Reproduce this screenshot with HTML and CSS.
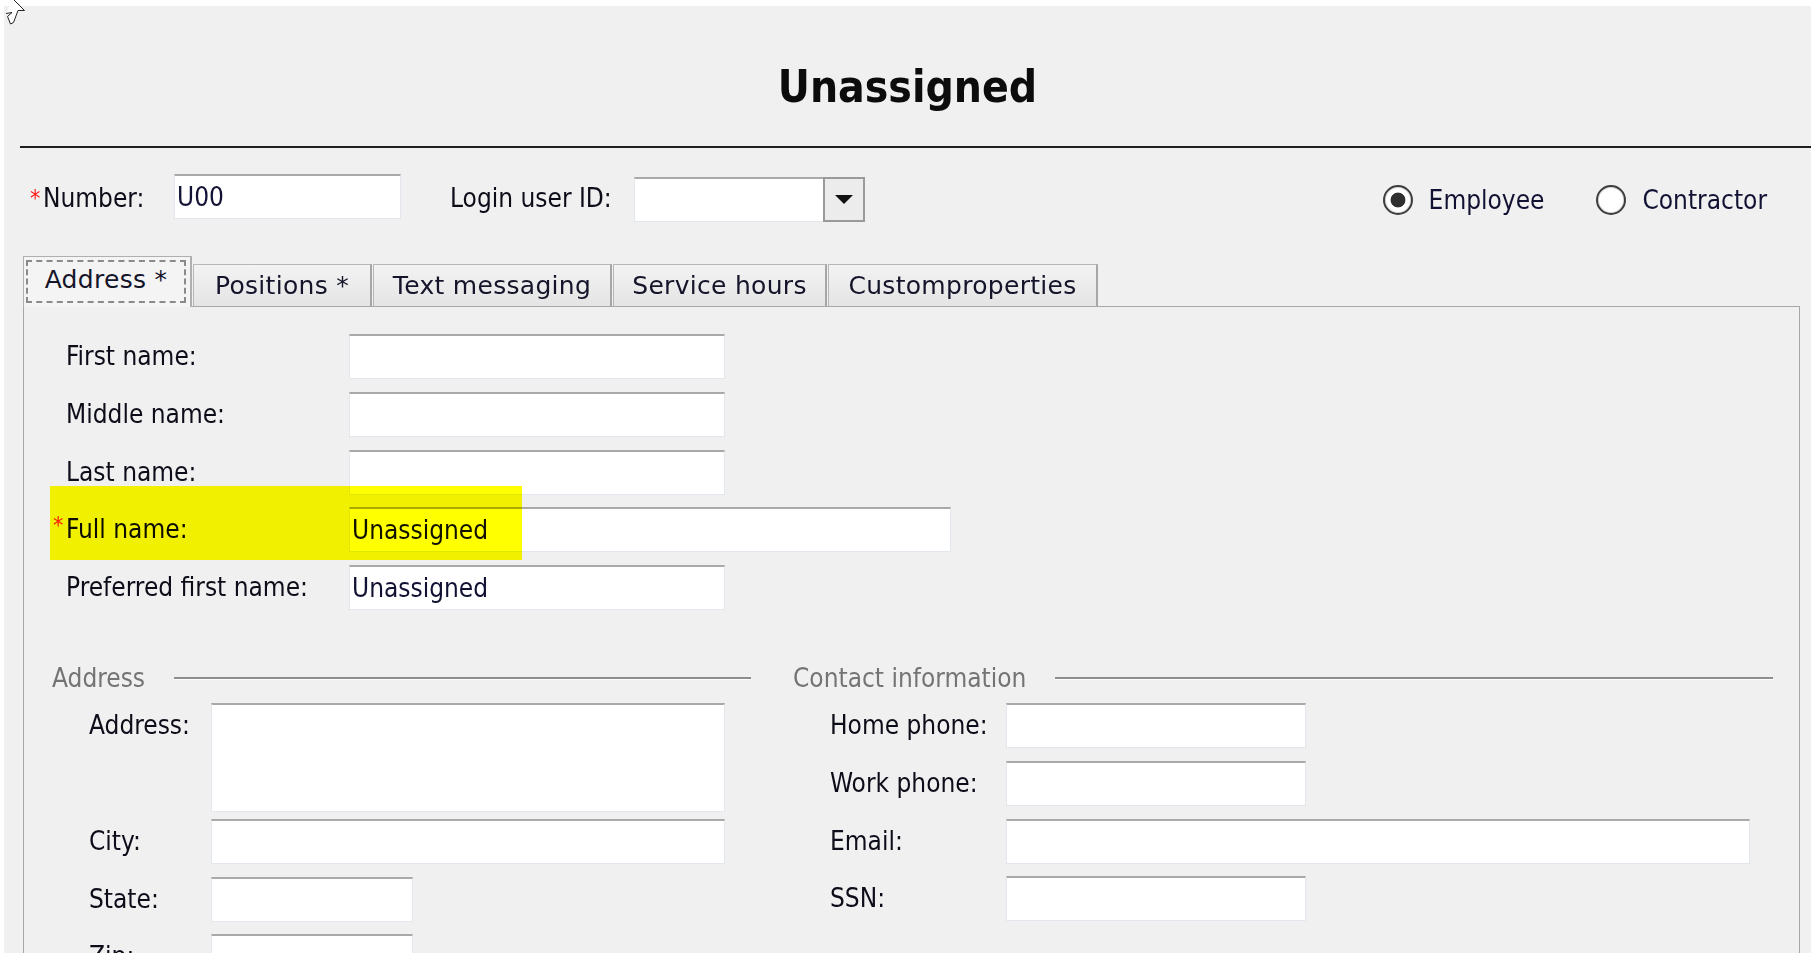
FILE: index.html
```html
<!DOCTYPE html>
<html lang="en">
<head>
<meta charset="utf-8">
<title>Unassigned</title>
<link rel="stylesheet" href="styles.css">
</head>
<body>
<div class="window">
  <div class="titlebar"><h1 class="title">Unassigned</h1></div>
  <div class="rule"></div>

  <div class="idrow">
    <span class="req">*</span><span class="lbl lbl-number">Number:</span>
    <div class="tb tb-number">U00</div>
    <span class="lbl lbl-login">Login user ID:</span>
    <div class="combo">
      <div class="combo-field"></div>
      <div class="combo-btn">
        <svg width="20" height="11" viewBox="0 0 20 11"><path d="M1 1 H19 L10 10 Z" fill="#111"/></svg>
      </div>
    </div>
    <div class="radios">
      <span class="radio checked"></span><span class="radio-text">Employee</span>
      <span class="radio radio-second"></span><span class="radio-text">Contractor</span>
    </div>
  </div>

  <div class="tabs">
    <div class="tab tab-active tab-address"><span class="focus">Address *</span></div>
    <div class="tab tab-positions">Positions *</div>
    <div class="tab tab-text">Text messaging</div>
    <div class="tab tab-service">Service hours</div>
    <div class="tab tab-custom">Custom<span class="tight"> </span>properties</div>
  </div>

  <div class="panel">
    <div class="names">
      <span class="lbl">First name:</span><div class="tb tb-name"></div>
      <span class="lbl">Middle name:</span><div class="tb tb-name"></div>
      <span class="lbl">Last name:</span><div class="tb tb-name"></div>
      <span class="lbl"><span class="req req-inline">*</span>Full name:</span><div class="tb tb-full">Unassigned</div>
      <span class="lbl">Preferred first name:</span><div class="tb tb-name">Unassigned</div>
    </div>

    <div class="sections">
      <section class="group group-address">
        <div class="group-head"><span class="group-title">Address</span><span class="group-line"></span></div>
        <div class="fields fields-address">
          <span class="lbl">Address:</span><div class="tb tb-area"></div>
          <span class="lbl">City:</span><div class="tb tb-addr"></div>
          <span class="lbl">State:</span><div class="tb tb-state"></div>
          <span class="lbl">Zip:</span><div class="tb tb-state"></div>
        </div>
      </section>
      <section class="group group-contact">
        <div class="group-head"><span class="group-title">Contact information</span><span class="group-line"></span></div>
        <div class="fields fields-contact">
          <span class="lbl">Home phone:</span><div class="tb tb-phone"></div>
          <span class="lbl">Work phone:</span><div class="tb tb-phone"></div>
          <span class="lbl">Email:</span><div class="tb tb-email"></div>
          <span class="lbl">SSN:</span><div class="tb tb-phone"></div>
        </div>
      </section>
    </div>
  </div>
</div>

<div class="highlight"></div>

<svg class="cursor" width="30" height="28" viewBox="0 0 30 28">
  <path d="M13 -1 L24.5 10.5 L18 10.5 L13.5 22.5 L10.5 24 L7.5 16.5 L12 12.5 L6 13.5" fill="#fff" stroke="#222" stroke-width="1" stroke-linejoin="miter"/>
</svg>
</body>
</html>
```

FILE: styles.css
```css
html, body {
  margin: 0;
  padding: 0;
}

body {
  width: 1811px;
  height: 953px;
  overflow: hidden;
  background: #ffffff;
  position: relative;
  font-family: "DejaVu Sans Condensed", "DejaVu Sans", sans-serif;
  font-size: 26px;
  color: #111111;
}

.window {
  margin: 6px 0 0 4px;
  height: 947px;
  background: #f0f0f0;
  overflow: hidden;
}

/* ---------- title ---------- */
.titlebar {
  height: 140px;
  box-sizing: border-box;
  padding-top: 22px;
  display: flex;
  align-items: center;
  justify-content: center;
}

.title {
  margin: 0;
  font-family: "DejaVu Sans Condensed", "DejaVu Sans", sans-serif;
  font-weight: bold;
  font-size: 44px;
  line-height: 1.15;
  color: #0c0c0c;
}

.rule {
  height: 2px;
  margin-left: 16px;
  background: #1e1e1e;
}

/* ---------- generic ---------- */
.lbl {
  white-space: nowrap;
  color: #0d0d1a;
  line-height: 45px;
}

.req {
  color: #ff1a1a;
  font-size: 23px;
  display: inline-block;
  width: 13px;
  margin-left: 2px;
  align-self: flex-start;
  line-height: 20px;
  margin-top: 14px;
}

.req-inline {
  width: 13px;
  margin-left: -13px;
  margin-top: 0;
  vertical-align: 5px;
}

.tb {
  box-sizing: border-box;
  height: 45px;
  background: #ffffff;
  border: 1px solid #e2e7ee;
  border-top: 2px solid #a9a9a9;
  padding-left: 2px;
  line-height: 42px;
  white-space: nowrap;
  color: #111133;
}

/* ---------- id row ---------- */
.idrow {
  margin-top: 26px;
  height: 48px;
  display: flex;
  align-items: center;
  padding-left: 24px;
}

.lbl-number {
  width: 131px;
}

.tb-number {
  width: 227px;
  align-self: flex-start;
}

.lbl-login {
  margin-left: 49px;
  width: 184px;
}

.combo {
  width: 231px;
  height: 45px;
  align-self: flex-end;
  display: flex;
  box-sizing: border-box;
  border: 1px solid #e2e7ee;
  border-top: 2px solid #a9a9a9;
  background: #ffffff;
}

.combo-field {
  flex: 1;
}

.combo-btn {
  width: 42px;
  box-sizing: border-box;
  margin: -2px -1px -1px 0;
  border: 2px solid #9a9a9a;
  background: #ececec;
  display: flex;
  align-items: center;
  justify-content: center;
}

.radios {
  margin-left: auto;
  padding-right: 44px;
  display: flex;
  align-items: center;
  margin-top: 3px;
}

.radio {
  width: 30px;
  height: 30px;
  box-sizing: border-box;
  border-radius: 50%;
  border: 2px solid #3d3d3d;
  background: #ffffff;
  box-shadow: inset 0 0 0 1px #d8d8d8;
  margin-right: 16px;
}

.radio.checked {
  background: radial-gradient(circle, #303030 0 7px, #ffffff 7.8px);
}

.radio-second {
  margin-left: 52px;
}

.radio-text {
  color: #111133;
}

/* ---------- tabs ---------- */
.tabs {
  margin-top: 34px;
  margin-left: 19px;
  height: 50px;
  display: flex;
  align-items: flex-end;
  gap: 1px;
}

.tab {
  box-sizing: border-box;
  height: 42px;
  border: 1px solid #b8b8b8;
  border-right: 2px solid #a6a6a6;
  border-bottom: none;
  background: linear-gradient(#f3f3f3, #e4e4e4);
  font-family: "DejaVu Sans", sans-serif;
  font-size: 25px;
  letter-spacing: 0.3px;
  color: #14142a;
  display: flex;
  align-items: center;
  justify-content: center;
  white-space: nowrap;
}

.tab-active {
  position: relative;
  z-index: 1;
  height: 51px;
  margin-bottom: -1px;
  background: #f4f4f4;
  border-color: #b0b0b0;
  padding: 3px 4px 4px 2px;
}

.focus {
  flex: 1;
  align-self: stretch;
  display: flex;
  align-items: center;
  justify-content: center;
  border: 2px dashed #8a8a8a;
  padding-bottom: 4px;
}

.tab-address { width: 169px; }
.tab-positions { width: 179px; }
.tab-text { width: 239px; }
.tab-service { width: 214px; }
.tab-custom { width: 270px; }

.tight {
  letter-spacing: -6px;
}

/* ---------- panel ---------- */
.panel {
  margin-left: 19px;
  width: 1777px;
  height: 700px;
  box-sizing: border-box;
  border: 1px solid #a8a8a8;
  border-bottom: none;
  padding: 27px 0 0 42px;
}

.names {
  display: grid;
  grid-template-columns: 283px auto;
  grid-auto-rows: 45px;
  row-gap: 12.75px;
  justify-items: start;
}

.tb-name { width: 376px; }
.tb-full { width: 602px; }

/* ---------- sections ---------- */
.sections {
  margin-top: 53px;
  margin-left: -14px;
  display: grid;
  grid-template-columns: 699px 980px;
  column-gap: 42px;
}

.group-head {
  height: 30px;
  display: flex;
  align-items: center;
}

.group-title {
  color: #747474;
  white-space: nowrap;
}

.group-line {
  flex: 1;
  margin-left: 29px;
  height: 0;
  border-top: 2px solid #8e8e8e;
  border-bottom: 1px solid #ffffff;
}

.fields {
  margin-top: 10px;
  padding-left: 37px;
  display: grid;
  grid-auto-rows: 45px;
  row-gap: 12.75px;
  justify-items: start;
  align-items: start;
}

.fields-address {
  grid-template-columns: 122px auto;
  grid-template-rows: 103px;
}

.fields-contact {
  grid-template-columns: 176px auto;
}

.tb-area { width: 514px; height: 109px; margin-bottom: -6px; }
.tb-addr { width: 514px; }
.tb-state { width: 202px; }
.tb-phone { width: 300px; }
.tb-email { width: 744px; }

/* ---------- overlays ---------- */
.highlight {
  position: absolute;
  left: 50px;
  top: 486px;
  width: 472px;
  height: 74px;
  background: #ffff00;
  mix-blend-mode: multiply;
}

.cursor {
  position: absolute;
  left: 0;
  top: 0;
}
```
